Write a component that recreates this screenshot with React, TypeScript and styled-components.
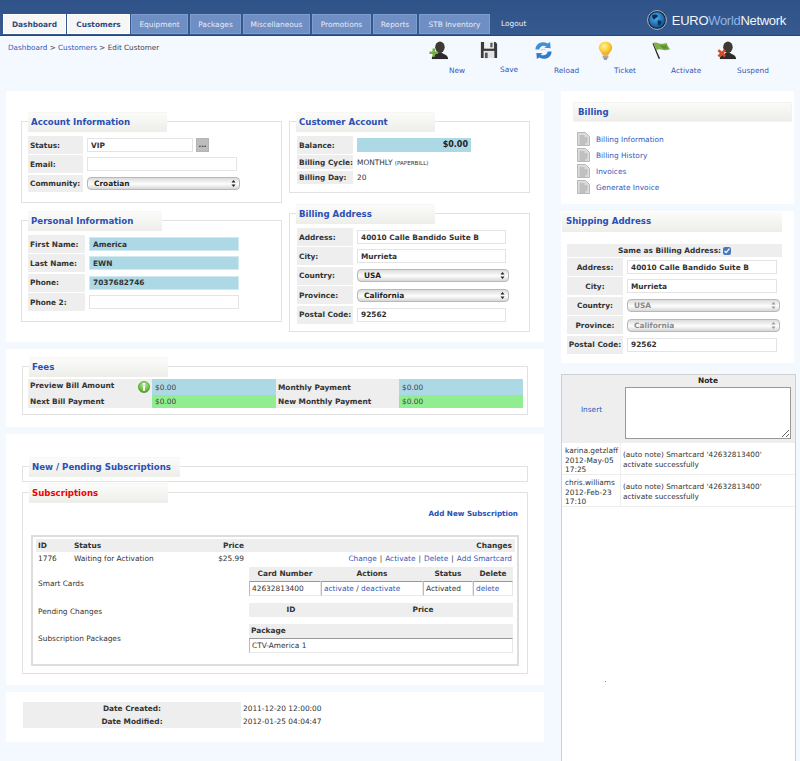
import React from "react";
import styled, { createGlobalStyle } from "styled-components";

const Global = createGlobalStyle`
  html, body { margin: 0; padding: 0; background: #f4f8ff; }
  body { font-family: "DejaVu Sans", Verdana, sans-serif; font-size: 7.4px; color: #333; }
  * { box-sizing: border-box; }
`;

const Page = styled.div`
  width: 800px;
  height: 761px;
  overflow: hidden;
  display: flex;
  flex-direction: column;
`;
const Header = styled.header`
  height: 36px;
  flex: none;
  background: linear-gradient(#2f5289, #36598f);
  border-bottom: 1px solid #27477b;
  padding: 14px 0 0 3px;
  display: flex;
  align-items: flex-start;
`;
const Tab = styled.a<{ $w: number; $active?: boolean }>`
  width: ${(p) => p.$w}px;
  height: 20px;
  margin-right: ${(p) => (p.$active ? 1 : 2)}px;
  display: flex;
  align-items: center;
  justify-content: center;
  font-size: 7.4px;
  font-weight: ${(p) => (p.$active ? 700 : 400)};
  color: ${(p) => (p.$active ? "#2f4a80" : "#e6ecf6")};
  background: ${(p) => (p.$active ? "#f6f6f6" : "#6f8fc4")};
  border: 1px solid ${(p) => (p.$active ? "#fff" : "#7f9dcf")};
`;
const Logout = styled.a`
  margin: 0 0 0 9px;
  height: 20px;
  line-height: 20px;
  font-size: 7.4px;
  color: #eef2f8;
`;
const Logo = styled.div`
  margin: -4px 0 0 auto;
  padding-right: 14px;
  display: flex;
  align-items: center;
  gap: 5px;
  font-family: "Liberation Sans", Arial, sans-serif;
  font-size: 13px;
  letter-spacing: -0.3px;
  color: #f2f5f9;
`;
const LogoWorld = styled.span`
  color: #8fb4e6;
`;

const TopBar = styled.div`
  height: 55px;
  flex: none;
  display: flex;
  justify-content: space-between;
  padding: 7px 0 0 8px;
`;
const Crumbs = styled.div`
  line-height: 9px;
  font-size: 7.25px;
  color: #444;
`;
const Link = styled.a`
  color: #3558b8;
`;
const Tools = styled.div`
  display: flex;
  width: 371px;
`;
const Tool = styled.div<{ $w: number; $off: number }>`
  width: ${(p) => p.$w}px;
  display: flex;
  flex-direction: column;
  gap: 6px;
  color: #3558b8;
  span {
    margin-left: ${(p) => p.$off}px;
    line-height: 10px;
    white-space: nowrap;
  }
  svg { display: block; margin-top: -2px; }
`;

const Main = styled.div`
  flex: 1;
  display: flex;
  min-height: 0;
  padding-left: 6px;
`;
const LeftCol = styled.div`
  width: 538px;
  flex: none;
  display: flex;
  flex-direction: column;
  gap: 7px;
`;
const RightCol = styled.div`
  width: 235px;
  margin-left: 17px;
  flex: none;
  display: flex;
  flex-direction: column;
`;
const Panel = styled.section<{ $h: number; $pt: number }>`
  height: ${(p) => p.$h}px;
  background: #fff;
  padding: ${(p) => p.$pt}px 16px 0 16px;
`;
const Columns = styled.div`
  display: flex;
  gap: 7px;
  margin-left: -1px;
`;
const Stack = styled.div<{ $w: number; $gap: number }>`
  width: ${(p) => p.$w}px;
  flex: none;
  display: flex;
  flex-direction: column;
  gap: ${(p) => p.$gap}px;
`;
const Box = styled.div<{ $h: number; $w?: number; $mt?: number }>`
  height: ${(p) => p.$h}px;
  ${(p) => (p.$w ? `width: ${p.$w}px;` : "")}
  margin-top: ${(p) => p.$mt ?? 0}px;
  border: 1px solid #e2e2e2;
  background: #fff;
  padding: 0 6px;
`;
const Legend = styled.h3<{ $w: number; $red?: boolean }>`
  width: ${(p) => p.$w}px;
  height: 20px;
  margin: -10px 0 4px 0;
  padding-left: 3px;
  line-height: 18px;
  font-size: 8.6px;
  font-weight: 700;
  white-space: nowrap;
  color: ${(p) => (p.$red ? "#f00000" : "#2a4fb5")};
  background: linear-gradient(#fbfbf9, #ededea);
  border-top: 1px solid #f6f6f4;
`;
const Rows = styled.div<{ $ml?: number }>`
  display: flex;
  flex-direction: column;
  gap: 1.4px;
  margin-left: ${(p) => p.$ml ?? 0}px;
`;
const FormRow = styled.div<{ $lw: number; $h?: number; $center?: boolean }>`
  display: grid;
  grid-template-columns: ${(p) => p.$lw}px 1fr;
  column-gap: 4px;
  height: ${(p) => p.$h ?? 18}px;
  align-items: center;
  > label {
    height: 100%;
    display: flex;
    align-items: center;
    justify-content: ${(p) => (p.$center ? "center" : "flex-start")};
    padding-left: ${(p) => (p.$center ? 0 : 2)}px;
    font-weight: 700;
    background: #eeeeee;
    color: #333;
    white-space: nowrap;
  }
`;
const Field = styled.input<{ $w: number; $blue?: boolean }>`
  width: ${(p) => p.$w}px;
  height: 14px;
  padding: 0 3px;
  font: 700 7.4px "DejaVu Sans", sans-serif;
  color: #333;
  background: ${(p) => (p.$blue ? "#add8e6" : "#fff")};
  border: 1px solid ${(p) => (p.$blue ? "#d3e9f0" : "#e4e4e4")};
  outline: none;
`;
const Inline = styled.div`
  display: flex;
  align-items: center;
  gap: 3px;
`;
const DotsButton = styled.button`
  width: 13px;
  height: 14px;
  padding: 0;
  border: 1px solid #b4b4b4;
  background: #bdbdbd;
  color: #333;
  font: 700 7px "DejaVu Sans", sans-serif;
  line-height: 8px;
`;
const SelectWrap = styled.div<{ $w: number }>`
  position: relative;
  width: ${(p) => p.$w}px;
  height: 13px;
  svg { position: absolute; right: 4px; top: 3px; }
`;
const Select = styled.select<{ $off?: boolean }>`
  appearance: none;
  width: 100%;
  height: 100%;
  padding: 0 0 0 6px;
  border: 1px solid #b8b8b8;
  border-radius: 4px;
  background: linear-gradient(#dcdcdc, #fdfdfd 55%, #d6d6d6);
  font: 700 7.4px "DejaVu Sans", sans-serif;
  color: ${(p) => (p.$off ? "#888" : "#222")};
  opacity: 1;
`;
const Plain = styled.div`
  color: #333;
  small { font-size: 5.6px; }
`;
const Balance = styled.div`
  width: 114px;
  height: 14px;
  line-height: 14px;
  background: #add8e6;
  text-align: right;
  padding-right: 3px;
  font-weight: 700;
  font-size: 8px;
  color: #222;
`;

const FeesGrid = styled.div`
  width: 495px;
  display: grid;
  grid-template-columns: 124px 124px 123px 124px;
  grid-template-rows: 16px 13px;
  margin: -2px 0 0 -1px;
`;
const FeeLabel = styled.div<{ $top?: boolean }>`
  position: relative;
  background: #eeeeee;
  font-weight: 700;
  display: flex;
  align-items: ${(p) => (p.$top ? "flex-start" : "center")};
  padding: ${(p) => (p.$top ? "2px 0 0 2px" : "0 0 0 2px")};
  white-space: nowrap;
  svg { position: absolute; right: 2px; top: 2px; }
`;
const FeeValue = styled.div<{ $green?: boolean }>`
  background: ${(p) => (p.$green ? "#90ee90" : "#add8e6")};
  color: #444;
  display: flex;
  align-items: center;
  padding-left: 3px;
`;
const AddLink = styled.div`
  text-align: right;
  padding: 2px 3px 0 0;
  height: 28px;
  font-size: 7.2px;
  font-weight: 700;
  color: #2a4fb5;
  a { color: inherit; }
`;
const SubFrame = styled.div`
  margin-left: 2px;
  width: 488px;
  height: 131px;
  border: 2px solid #dddddd;
  padding: 2px 2px 0 3px;
`;
const SubRow = styled.div<{ $h: number; $pb?: number; $head?: boolean }>`
  display: grid;
  grid-template-columns: 36px 113px 57px 1fr;
  height: ${(p) => p.$h}px;
  padding-bottom: ${(p) => p.$pb ?? 0}px;
  align-items: center;
  background: ${(p) => (p.$head ? "#eeeeee" : "transparent")};
  font-weight: ${(p) => (p.$head ? 700 : 400)};
  padding-left: 2px;
  padding-right: 3px;
  white-space: nowrap;
`;
const Right = styled.div`
  text-align: right;
`;
const Sep = styled.span`
  margin: 0 3px;
  color: #333;
`;
const Nested = styled.div<{ $h: number; $mb?: number }>`
  display: grid;
  grid-template-columns: 213px 264px;
  height: ${(p) => p.$h}px;
  margin-bottom: ${(p) => p.$mb ?? 0}px;
  align-items: center;
`;
const NestedLabel = styled.div<{ $pt?: number }>`
  padding: ${(p) => p.$pt ?? 0}px 0 0 2px;
`;
const MiniTable = styled.div<{ $cols: string }>`
  display: grid;
  grid-template-columns: ${(p) => p.$cols};
`;
const MiniHead = styled.div<{ $left?: boolean }>`
  height: 14px;
  line-height: 13px;
  background: #eeeeee;
  font-weight: 700;
  text-align: ${(p) => (p.$left ? "left" : "center")};
  padding-left: ${(p) => (p.$left ? 2 : 0)}px;
`;
const MiniCell = styled.div`
  height: 15px;
  line-height: 13px;
  padding-left: 2px;
  border-top: 1px solid #999;
  border-left: 1px solid #bbb;
  border-bottom: 1px solid #e8e8e8;
  border-right: 1px solid #e8e8e8;
  white-space: nowrap;
`;
const DateRow = styled.div`
  display: grid;
  grid-template-columns: 218px 1fr;
  column-gap: 2px;
  height: 13px;
  line-height: 13px;
  b {
    background: #eeeeee;
    text-align: center;
    font-weight: 700;
  }
`;
const DateBlock = styled.div`
  margin-left: 1px;
`;

const BillingTitle = styled.h3`
  height: 20px;
  margin: 0 0 9px 0;
  padding-left: 4px;
  line-height: 19px;
  font-size: 8.6px;
  font-weight: 700;
  color: #2a4fb5;
  background: linear-gradient(#fbfbf9, #ededea);
  border: 1px solid #f2f2f0;
`;
const BillingLink = styled.a`
  display: flex;
  align-items: center;
  height: 16px;
  padding-left: 4px;
  gap: 6px;
  color: #3558b8;
`;
const SidePanel = styled.section<{ $h: number; $mt?: number }>`
  height: ${(p) => p.$h}px;
  margin-top: ${(p) => p.$mt ?? 0}px;
  width: 233px;
  background: #fff;
  display: flow-root;
`;
const BillingBody = styled.div`
  padding: 11px 2px 0 12px;
`;
const ShipTitle = styled(BillingTitle)`
  width: 220px;
  margin: 1px 0 12px 1px;
  border: none;
`;
const ShipBody = styled.div`
  padding: 0 12px 0 6px;
`;
const SameRow = styled.div`
  height: 13px;
  width: 215px;
  margin-bottom: 1px;
  background: #eeeeee;
  font-weight: 700;
  display: flex;
  align-items: center;
  justify-content: center;
  gap: 2px;
  input { width: 8px; height: 8px; margin: 0; accent-color: #4a78b8; }
`;
const NoteTable = styled.div`
  margin-top: 11px;
  flex: 1;
  border: 1px solid #cfcfcf;
  border-bottom: none;
  background: #fff;
  display: flex;
  flex-direction: column;
  position: relative;
`;
const NoteHead = styled.div`
  display: grid;
  grid-template-columns: 59px 1fr;
  height: 68px;
  background: #eeeeee;
`;
const InsertCell = styled.div`
  display: flex;
  align-items: center;
  justify-content: center;
  color: #3558b8;
`;
const NoteCell = styled.div`
  display: flex;
  flex-direction: column;
  align-items: center;
  font-weight: 700;
  padding-top: 1px;
  line-height: 10px;
  color: #222;
`;
const NoteArea = styled.textarea`
  width: 166px;
  height: 52px;
  margin: 1px 0 0 0;
  border: 1px solid #999;
  background: #fff;
  display: block;
`;
const NoteRow = styled.div`
  display: grid;
  grid-template-columns: 59px 1fr;
  height: 32px;
  border-bottom: 1px solid #eeeeee;
  line-height: 9.5px;
`;
const NoteWho = styled.div`
  padding: 3px 0 0 3px;
  border-right: 1px solid #eeeeee;
  white-space: nowrap;
`;
const NoteText = styled.div`
  padding: 7px 0 0 2px;
  font-size: 7.3px;
  white-space: nowrap;
`;
const Dot = styled.i`
  position: absolute;
  left: 43px;
  top: 306px;
  width: 1px;
  height: 1px;
  background: #888;
`;

const Person = ({ badge }: { badge: "plus" | "x" }) => (
  <svg width="19" height="19" viewBox="0 0 20 20">
    <ellipse cx="11.5" cy="6.5" rx="5" ry="6" fill="#3d3a32" />
    <path d="M3 18 C3.5 14 8 14 9.5 12 L13.5 12 C15 14 19.5 14 20 18 Z" fill="#2e2c28" />
    <path d="M3 18h17v1H3z" fill="#111" />
    {badge === "plus" ? (
      <path d="M0.5 11h3.2V8h2.6v3h3.2v2.6H6.3v3H3.7v-3H.5z" fill="#6fb043" />
    ) : (
      <path d="M.5 10.4 2.4 8.6 5 11 7.6 8.6l1.8 1.8L7 12.9l2.4 2.4-1.8 1.8L5 14.7l-2.6 2.4-1.9-1.8L3 12.9z" fill="#d8482a" />
    )}
  </svg>
);
const Floppy = () => (
  <svg width="18" height="18" viewBox="0 0 20 20">
    <path d="M1 1h16l2 2v16H1z" fill="#3a3a3a" />
    <rect x="4.5" y="1" width="11" height="7.5" fill="#f0f0f0" />
    <rect x="11.5" y="2" width="2.4" height="5" fill="#555" />
    <rect x="4" y="11" width="12" height="8" fill="#e4e4e4" />
    <rect x="5.5" y="13" width="3" height="6" fill="#555" />
  </svg>
);
const Reload = () => (
  <svg width="19" height="19" viewBox="0 0 20 20">
    <path d="M1.5 9 C1.5 3 8 -1 14.5 2.6 L17 1 17.5 7.5 10.8 7 13 5.5 C9 3.8 6 6 5.6 9 Z" fill="#3f8fd8" />
    <path d="M18.5 11 C18.5 17 12 21 5.5 17.4 L3 19 2.5 12.5 9.2 13 7 14.5 C11 16.2 14 14 14.4 11 Z" fill="#2f7cc8" />
    <path d="M7 9.2 C9 7.6 11 8 13 8.8 L12 10 C10.5 9.4 9 9.4 8 10.4Z" fill="#bcdcf4" />
  </svg>
);
const Bulb = () => (
  <svg width="19" height="19" viewBox="0 0 20 20">
    <defs>
      <radialGradient id="bulbg" cx="0.4" cy="0.35" r="0.7">
        <stop offset="0" stopColor="#fff3a0" />
        <stop offset="0.6" stopColor="#fbc92b" />
        <stop offset="1" stopColor="#e59a12" />
      </radialGradient>
    </defs>
    <path d="M10 0.8 C5 0.8 3 4.4 3 7.2 C3 10.4 6 11.8 6.8 14.6 H13.2 C14 11.8 17 10.4 17 7.2 C17 4.4 15 0.8 10 0.8Z" fill="url(#bulbg)" />
    <rect x="7" y="15" width="6" height="3.4" rx="1" fill="#a9a9a0" />
    <rect x="8.4" y="18.2" width="3.2" height="1.4" fill="#77776f" />
  </svg>
);
const Flag = () => (
  <svg width="19" height="19" viewBox="0 0 20 20">
    <path d="M1.5 2 L8.5 18.5 L7 19 L0.5 2.6Z" fill="#2d2d28" />
    <path d="M1.5 2 C5 0.5 7 3 10 3 C12 3 14 2.4 15.5 2 C16 5 18 7 19 8.6 C16.5 9.5 14.5 10 12 9.5 C9 9 7 8 5 10Z" fill="#7fb04a" />
    <path d="M8 4 C10 5 13 4.5 15 4 C15.5 6 16.5 7 17 8 C15 8.6 13 8.6 11 8Z" fill="#5f9435" />
  </svg>
);
const Doc = () => (
  <svg width="13" height="14" viewBox="0 0 13 14">
    <path d="M.5.5h8l4 4v9H.5z" fill="#dcdcdc" stroke="#b8b8b8" />
    <path d="M2.5 4h5M2.5 6h8M2.5 8h8M2.5 10h8M2.5 12h6" stroke="#a4a4a4" strokeWidth="1" />
  </svg>
);
const Info = () => (
  <svg width="12" height="12" viewBox="0 0 12 12">
    <defs>
      <radialGradient id="infog" cx="0.5" cy="0.3" r="0.8">
        <stop offset="0" stopColor="#c4ecaa" />
        <stop offset="0.7" stopColor="#5cb531" />
        <stop offset="1" stopColor="#3e8d1e" />
      </radialGradient>
    </defs>
    <circle cx="6" cy="6" r="5.6" fill="url(#infog)" stroke="#3e8d1e" strokeWidth="0.6" />
    <path d="M5 2h2v1.8H5zM5 4.8h2v5H5z" fill="#fff" />
  </svg>
);
const Globe = () => (
  <svg width="20" height="20" viewBox="0 0 20 20">
    <defs>
      <radialGradient id="globeg" cx="0.4" cy="0.35" r="0.7">
        <stop offset="0" stopColor="#4fb3ef" />
        <stop offset="1" stopColor="#0c4c8f" />
      </radialGradient>
    </defs>
    <circle cx="10" cy="10" r="9.4" fill="#11243f" stroke="#aeb8c4" strokeWidth="1" />
    <circle cx="10" cy="10" r="7.8" fill="url(#globeg)" />
    <path d="M5 5.5 C7 4 10 4 11 6 C10.5 8 8 7.5 7.6 9.5 C6.5 10 5 8 5 5.5Z M11 10.5 C13 10 15 11 14.4 13 C13.4 15 12 16 11.4 15 C11 13.5 10 12 11 10.5Z" fill="#0b2f5c" />
  </svg>
);
const Arrows = ({ off }: { off?: boolean }) => (
  <svg width="5" height="7" viewBox="0 0 5 7">
    <path d="M2.5 0 4.5 2.6h-4zM2.5 7 .5 4.4h4z" fill={off ? "#999" : "#222"} />
  </svg>
);

const Drop = ({ w, value, off }: { w: number; value: string; off?: boolean }) => (
  <SelectWrap $w={w}>
    <Select $off={off} disabled={off} defaultValue={value}>
      <option>{value}</option>
    </Select>
    <Arrows off={off} />
  </SelectWrap>
);

const tabs: [string, number][] = [
  ["Equipment", 57],
  ["Packages", 51],
  ["Miscellaneous", 67],
  ["Promotions", 59],
  ["Reports", 44],
  ["STB Inventory", 71],
];

export default function App() {
  return (
    <Page>
      <Global />
      <Header>
        <Tab $w={63} $active>Dashboard</Tab>
        <Tab $w={63} $active>Customers</Tab>
        {tabs.map(([t, w]) => (
          <Tab key={t} $w={w}>{t}</Tab>
        ))}
        <Logout>Logout</Logout>
        <Logo>
          <Globe />
          <span>EURO<LogoWorld>World</LogoWorld>Network</span>
        </Logo>
      </Header>
      <TopBar>
        <Crumbs>
          <Link>Dashboard</Link> &gt; <Link>Customers</Link> &gt; Edit Customer
        </Crumbs>
        <Tools>
          <Tool $w={51} $off={20}><Person badge="plus" /><span>New</span></Tool>
          <Tool $w={54} $off={20}><Floppy /><span>Save</span></Tool>
          <Tool $w={62} $off={20}><Reload /><span>Reload</span></Tool>
          <Tool $w={56} $off={18}><Bulb /><span>Ticket</span></Tool>
          <Tool $w={65} $off={19}><Flag /><span>Activate</span></Tool>
          <Tool $w={83} $off={20}><Person badge="x" /><span>Suspend</span></Tool>
        </Tools>
      </TopBar>
      <Main>
        <LeftCol>
          <Panel $h={251} $pt={30}>
            <Columns>
              <Stack $w={261} $gap={17}>
                <Box $h={82}>
                  <Legend $w={139}>Account Information</Legend>
                  <Rows>
                    <FormRow $lw={55}>
                      <label>Status:</label>
                      <Inline>
                        <Field $w={106} defaultValue="VIP" readOnly />
                        <DotsButton>...</DotsButton>
                      </Inline>
                    </FormRow>
                    <FormRow $lw={55}>
                      <label>Email:</label>
                      <Field $w={150} readOnly />
                    </FormRow>
                    <FormRow $lw={55} $h={17}>
                      <label>Community:</label>
                      <Drop w={153} value="Croatian" />
                    </FormRow>
                  </Rows>
                </Box>
                <Box $h={102}>
                  <Legend $w={134}>Personal Information</Legend>
                  <Rows>
                    <FormRow $lw={57}>
                      <label>First Name:</label>
                      <Field $w={150} $blue defaultValue="America" readOnly />
                    </FormRow>
                    <FormRow $lw={57}>
                      <label>Last Name:</label>
                      <Field $w={150} $blue defaultValue="EWN" readOnly />
                    </FormRow>
                    <FormRow $lw={57}>
                      <label>Phone:</label>
                      <Field $w={150} $blue defaultValue="7037682746" readOnly />
                    </FormRow>
                    <FormRow $lw={57}>
                      <label>Phone 2:</label>
                      <Field $w={150} readOnly />
                    </FormRow>
                  </Rows>
                </Box>
              </Stack>
              <Stack $w={241} $gap={20}>
                <Box $h={72}>
                  <Legend $w={139}>Customer Account</Legend>
                  <Rows $ml={1}>
                    <FormRow $lw={56}>
                      <label>Balance:</label>
                      <Balance>$0.00</Balance>
                    </FormRow>
                    <FormRow $lw={56} $h={14}>
                      <label>Billing Cycle:</label>
                      <Plain>MONTHLY <small>(PAPERBILL)</small></Plain>
                    </FormRow>
                    <FormRow $lw={56} $h={13}>
                      <label>Billing Day:</label>
                      <Plain>20</Plain>
                    </FormRow>
                  </Rows>
                </Box>
                <Box $h={119}>
                  <Legend $w={139}>Billing Address</Legend>
                  <Rows $ml={1}>
                    <FormRow $lw={56}>
                      <label>Address:</label>
                      <Field $w={149} defaultValue="40010 Calle Bandido Suite B" readOnly />
                    </FormRow>
                    <FormRow $lw={56}>
                      <label>City:</label>
                      <Field $w={149} defaultValue="Murrieta" readOnly />
                    </FormRow>
                    <FormRow $lw={56}>
                      <label>Country:</label>
                      <Drop w={152} value="USA" />
                    </FormRow>
                    <FormRow $lw={56}>
                      <label>Province:</label>
                      <Drop w={152} value="California" />
                    </FormRow>
                    <FormRow $lw={56}>
                      <label>Postal Code:</label>
                      <Field $w={149} defaultValue="92562" readOnly />
                    </FormRow>
                  </Rows>
                </Box>
              </Stack>
            </Columns>
          </Panel>

          <Panel $h={78} $pt={17}>
            <Box $h={49} $w={506}>
              <Legend $w={139}>Fees</Legend>
              <FeesGrid>
                <FeeLabel $top>Preview Bill Amount<Info /></FeeLabel>
                <FeeValue>$0.00</FeeValue>
                <FeeLabel>Monthly Payment</FeeLabel>
                <FeeValue>$0.00</FeeValue>
                <FeeLabel>Next Bill Payment</FeeLabel>
                <FeeValue $green>$0.00</FeeValue>
                <FeeLabel>New Monthly Payment</FeeLabel>
                <FeeValue $green>$0.00</FeeValue>
              </FeesGrid>
            </Box>
          </Panel>

          <Panel $h={251} $pt={32}>
            <Box $h={16} $w={506}>
              <Legend $w={151}>New / Pending Subscriptions</Legend>
            </Box>
            <Box $h={182} $w={506} $mt={10}>
              <Legend $w={139} $red>Subscriptions</Legend>
              <AddLink><a>Add New Subscription</a></AddLink>
              <SubFrame>
                <SubRow $h={13} $head>
                  <div>ID</div>
                  <div>Status</div>
                  <Right>Price</Right>
                  <Right>Changes</Right>
                </SubRow>
                <SubRow $h={15} $pb={2}>
                  <div>1776</div>
                  <div>Waiting for Activation</div>
                  <Right>$25.99</Right>
                  <Right>
                    <Link>Change</Link><Sep>|</Sep><Link>Activate</Link><Sep>|</Sep><Link>Delete</Link><Sep>|</Sep><Link>Add Smartcard</Link>
                  </Right>
                </SubRow>
                <Nested $h={28} $mb={8}>
                  <NestedLabel $pt={4}>Smart Cards</NestedLabel>
                  <MiniTable $cols="72px 102px 50px 40px">
                    <MiniHead>Card Number</MiniHead>
                    <MiniHead>Actions</MiniHead>
                    <MiniHead>Status</MiniHead>
                    <MiniHead>Delete</MiniHead>
                    <MiniCell>42632813400</MiniCell>
                    <MiniCell><Link>activate</Link> / <Link>deactivate</Link></MiniCell>
                    <MiniCell>Activated</MiniCell>
                    <MiniCell><Link>delete</Link></MiniCell>
                  </MiniTable>
                </Nested>
                <Nested $h={14} $mb={7}>
                  <NestedLabel $pt={2}>Pending Changes</NestedLabel>
                  <MiniTable $cols="84px 180px">
                    <MiniHead>ID</MiniHead>
                    <MiniHead>Price</MiniHead>
                  </MiniTable>
                </Nested>
                <Nested $h={29}>
                  <NestedLabel>Subscription Packages</NestedLabel>
                  <MiniTable $cols="264px">
                    <MiniHead $left>Package</MiniHead>
                    <MiniCell>CTV-America 1</MiniCell>
                  </MiniTable>
                </Nested>
              </SubFrame>
            </Box>
          </Panel>

          <Panel $h={50} $pt={10}>
            <DateBlock>
              <DateRow><b>Date Created:</b><span>2011-12-20 12:00:00</span></DateRow>
              <DateRow><b>Date Modified:</b><span>2012-01-25 04:04:47</span></DateRow>
            </DateBlock>
          </Panel>
        </LeftCol>

        <RightCol>
          <SidePanel $h={113}>
            <BillingBody>
              <BillingTitle>Billing</BillingTitle>
              <BillingLink><Doc />Billing Information</BillingLink>
              <BillingLink><Doc />Billing History</BillingLink>
              <BillingLink><Doc />Invoices</BillingLink>
              <BillingLink><Doc />Generate Invoice</BillingLink>
            </BillingBody>
          </SidePanel>
          <SidePanel $h={152} $mt={7}>
            <ShipTitle>Shipping Address</ShipTitle>
            <ShipBody>
              <SameRow>Same as Billing Address: <input type="checkbox" defaultChecked /></SameRow>
              <Rows>
                <FormRow $lw={56} $center>
                  <label>Address:</label>
                  <Field $w={150} defaultValue="40010 Calle Bandido Suite B" readOnly />
                </FormRow>
                <FormRow $lw={56} $center>
                  <label>City:</label>
                  <Field $w={150} defaultValue="Murrieta" readOnly />
                </FormRow>
                <FormRow $lw={56} $center>
                  <label>Country:</label>
                  <Drop w={153} value="USA" off />
                </FormRow>
                <FormRow $lw={56} $center>
                  <label>Province:</label>
                  <Drop w={153} value="California" off />
                </FormRow>
                <FormRow $lw={56} $center>
                  <label>Postal Code:</label>
                  <Field $w={150} defaultValue="92562" readOnly />
                </FormRow>
              </Rows>
            </ShipBody>
          </SidePanel>
          <NoteTable>
            <NoteHead>
              <InsertCell>Insert</InsertCell>
              <NoteCell>Note<NoteArea /></NoteCell>
            </NoteHead>
            <NoteRow>
              <NoteWho>karina.getzlaff<br />2012-May-05<br />17:25</NoteWho>
              <NoteText>(auto note) Smartcard '42632813400'<br />activate successfully</NoteText>
            </NoteRow>
            <NoteRow>
              <NoteWho>chris.williams<br />2012-Feb-23<br />17:10</NoteWho>
              <NoteText>(auto note) Smartcard '42632813400'<br />activate successfully</NoteText>
            </NoteRow>
            <Dot />
          </NoteTable>
        </RightCol>
      </Main>
    </Page>
  );
}
